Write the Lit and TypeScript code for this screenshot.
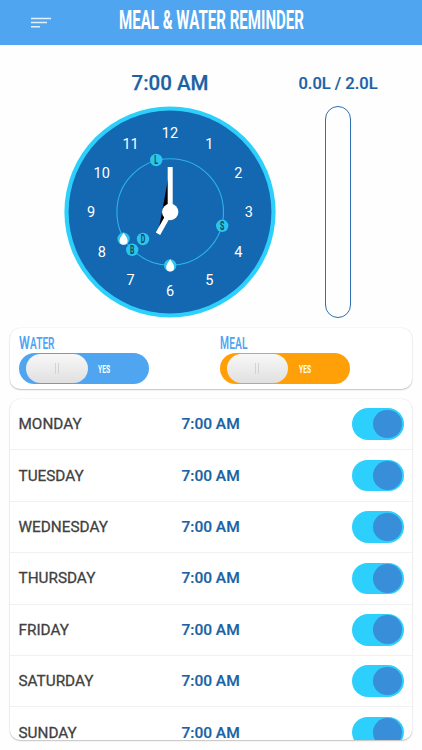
import { LitElement, html, svg, css } from "lit";
import { customElement, property } from "lit/decorators.js";

/** Tall condensed lettering, fitted to a given width. */
@customElement("narrow-text")
class NarrowText extends LitElement {
  @property() text = "";
  @property({ type: Number }) size = 20;
  @property({ type: Number }) width = 100;
  @property({ type: Number }) weight = 700;
  /** When set, the first letter is drawn larger and takes this width. */
  @property({ type: Number }) initial = 0;
  static styles = css`
    :host { display: block; line-height: 0; }
    svg { display: block; overflow: visible; fill: currentColor; font-family: Roboto, sans-serif; }
  `;
  render() {
    const h = Math.round(this.size * 0.72);
    const i = this.initial;
    const rest = i ? this.text.slice(1) : this.text;
    return html`<svg width=${this.width} height=${h} font-weight=${this.weight}>
      ${i ? svg`<text x="0" y=${h} font-size=${this.size} textLength=${i} lengthAdjust="spacingAndGlyphs">${this.text[0]}</text>` : ""}
      <text x=${i ? i + 0.3 : 0} y=${h} font-size=${i ? this.size * 0.88 : this.size}
        textLength=${this.width - (i ? i + 0.3 : 0)} lengthAdjust="spacingAndGlyphs">${rest}</text>
    </svg>`;
  }
}

@customElement("meal-clock")
class MealClock extends LitElement {
  static styles = css`
    :host { display: block; }
    svg { display: block; font-family: Roboto, sans-serif; }
    .rim { fill: #2dd0fb; }
    .face { fill: #1467b1; }
    .orbit { fill: none; stroke: #2bb5e9; stroke-width: 1.1; }
    .num { fill: #fff; font-size: 14.5px; text-anchor: middle; }
    .hand { stroke: #fff; stroke-width: 5; }
    .hub, .drop { fill: #fff; }
    .dot { fill: #2bc4ee; }
    .letter { fill: #16485a; font-size: 12px; font-weight: 700; text-anchor: middle; }
  `;
  render() {
    const nums = Array.from({ length: 12 }, (_, k) => {
      const a = ((k + 1) * Math.PI) / 6;
      return { n: k + 1, x: 106 + 78.8 * Math.sin(a), y: 106 - 78.8 * Math.cos(a) + 5.2 };
    });
    const meals: [string, number, number][] = [["L", 92.2, 54], ["S", 158.2, 119.8], ["B", 68.2, 143.8], ["D", 79, 133]];
    const drops = [[59.6, 132.8], [106.2, 159.4]];
    return html`<svg width="212" height="212" viewBox="0 0 212 212">
      <circle class="rim" cx="106" cy="106" r="105.6"></circle>
      <circle class="face" cx="106" cy="106" r="101.4"></circle>
      <circle class="orbit" cx="106.2" cy="106" r="53.3"></circle>
      ${nums.map((p) => svg`<text class="num" x=${p.x} y=${p.y}>${p.n}</text>`)}
      <path class="hand" d="M106.2 61V106L94 127.8"></path>
      <circle class="hub" cx="106.2" cy="106" r="8.2"></circle>
      ${drops.map(([x, y]) => svg`<g transform="translate(${x} ${y})">
        <circle class="dot" r="6.2"></circle>
        <path class="drop" d="M0-6.3C.8-3.8 4-1.4 4 2A4 4 0 0 1-4 2C-4-1.4-.8-3.8 0-6.3Z"></path></g>`)}
      ${meals.map(([t, x, y]) => svg`<g transform="translate(${x} ${y})">
        <circle class="dot" r="6.2"></circle>
        <text class="letter" y="4.3" transform="scale(.58 1)">${t}</text></g>`)}
    </svg>`;
  }
}

@customElement("app-root")
class AppRoot extends LitElement {
  static styles = css`
    :host {
      display: flex; flex-direction: column; box-sizing: border-box; width: 422px; height: 750px;
      background: #fefefe; overflow: hidden; font-family: Roboto, sans-serif; color: #1a62a5;
    }
    header { flex: none; height: 45px; display: flex; box-sizing: border-box; background: #50a5f1; color: #fff; padding: 11px 0 0 30px; }
    .menu { flex: none; width: 88.5px; padding-top: 6px; }
    .menu svg { display: block; }
    .top { flex: none; height: 283px; display: flex; }
    .left { width: 212px; margin-left: 64px; }
    .right { width: 124px; display: flex; flex-direction: column; align-items: center; }
    .time, .amount { font-weight: 500; display: flex; align-items: center; justify-content: center; height: 61px; padding-top: 8px; box-sizing: border-box; white-space: nowrap; }
    .time { padding-top: 15px; font-size: 20.5px; -webkit-text-stroke: .25px; }
    .amount { padding-top: 16px; font-size: 16.5px; -webkit-text-stroke: .2px; }
    .tube { width: 26px; height: 212px; box-sizing: border-box; border: 1px solid #2c70b0; border-radius: 13px; }
    .card {
      flex: none; margin: 0 10px; box-sizing: border-box; background: #fff; border-radius: 10px; overflow: hidden;
      box-shadow: 0 1px 1.5px rgba(0,0,0,.22), 0 0 1.5px rgba(0,0,0,.12);
    }
    .modes { height: 61px; display: grid; grid-template-columns: 200.5px 1fr; padding: 7px 0 0 9px; }
    .label { color: #50a5f1; }
    .slide { width: 130px; height: 31px; margin-top: 4px; border-radius: 16px; display: flex; align-items: center; box-sizing: border-box; padding-left: 7px; gap: 10.5px; color: #fff; background: #50a5f1; }
    .slide.meal { background: #ffa009; }
    .grip { width: 61.5px; height: 29px; border-radius: 15px; background: linear-gradient(#f8f8f8, #e0e0e0); display: flex; gap: 2px; align-items: center; justify-content: center; }
    .grip i { width: 1px; height: 11px; background: #d3d3d3; }
    .days { margin-top: 10px; height: 341px; }
    .row { height: 51.4px; box-sizing: border-box; display: flex; align-items: center; border-bottom: 1px solid #f1f1f3; padding: 0 8.5px; }
    .day { width: 163px; font-size: 15.3px; color: #414141; -webkit-text-stroke: .3px; }
    .at { flex: 1; font-size: 15.5px; font-weight: 500; -webkit-text-stroke: .2px; }
    .switch { width: 52px; height: 31.6px; box-sizing: border-box; border-radius: 16px; background: #2dd0fd; display: flex; align-items: center; justify-content: flex-end; padding-right: 1.6px; }
    .knob { width: 28.6px; height: 28.6px; border-radius: 50%; background: #398eda; }
  `;
  private mode(name: string, kind: string, width: number, initial: number) {
    return html`<div>
      <narrow-text class="label" .text=${name} .size=${19} .weight=${600} .width=${width} .initial=${initial}></narrow-text>
      <div class="slide ${kind}">
        <div class="grip"><i></i><i></i></div>
        <narrow-text .text=${"YES"} .size=${11.6} .width=${12}></narrow-text>
      </div>
    </div>`;
  }
  render() {
    const days = ["MONDAY", "TUESDAY", "WEDNESDAY", "THURSDAY", "FRIDAY", "SATURDAY", "SUNDAY"];
    return html`
      <header>
        <div class="menu"><svg width="22" height="12" stroke="#e2f1fd" stroke-width="1.5"><path d="M1 1.4H21M1 5.6H17M1 9.8H10"></path></svg></div>
        <narrow-text .text=${"MEAL & WATER REMINDER"} .size=${25} .width=${185}></narrow-text>
      </header>
      <section class="top">
        <div class="left"><div class="time">7:00 AM</div><meal-clock></meal-clock></div>
        <div class="right"><div class="amount">0.0L / 2.0L</div><div class="tube"></div></div>
      </section>
      <section class="card modes">${this.mode("WATER", "water", 35.5, 10.8)}${this.mode("MEAL", "meal", 27.5, 9)}</section>
      <section class="card days">
        ${days.map((d) => html`<div class="row"><span class="day">${d}</span><span class="at">7:00 AM</span><div class="switch"><div class="knob"></div></div></div>`)}
      </section>`;
  }
}
